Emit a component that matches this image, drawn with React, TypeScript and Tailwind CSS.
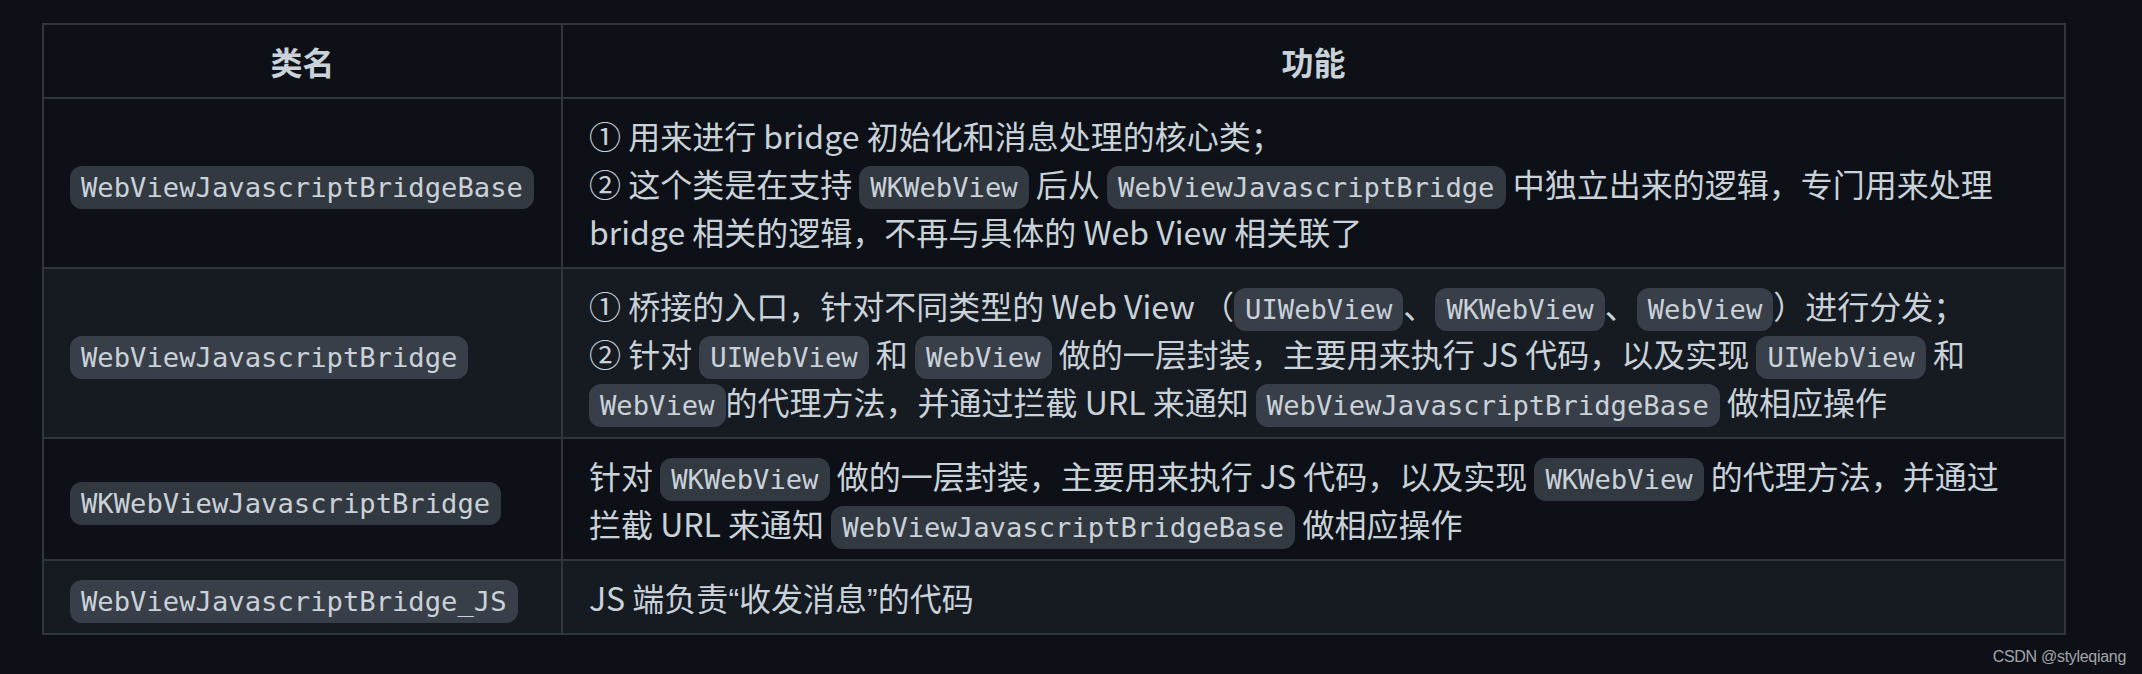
import React from "react";

const sans = "font-['Noto_Sans_CJK_SC',sans-serif]";

function Code({ children }: { children: React.ReactNode }) {
  return (
    <code className="rounded-[12px] bg-[#6e768166] px-[11px] py-[6px] font-['DejaVu_Sans_Mono',monospace] text-[27.2px] leading-[30px]">
      {children}
    </code>
  );
}

function Line({ children }: { children: React.ReactNode }) {
  return <div className="h-[48px] whitespace-nowrap">{children}</div>;
}

// narrow latin quotes, like the original rendering
function Q({ children }: { children: React.ReactNode }) {
  return <span className="font-['Liberation_Sans',sans-serif]">{children}</span>;
}

interface Row {
  name: string;
  lines: React.ReactNode[];
}

const rows: Row[] = [
  {
    name: "WebViewJavascriptBridgeBase",
    lines: [
      <>① 用来进行 bridge 初始化和消息处理的核心类；</>,
      <>
        ② 这个类是在支持 <Code>WKWebView</Code> 后从 <Code>WebViewJavascriptBridge</Code> 中独立出来的逻辑，专门用来处理
      </>,
      <>bridge 相关的逻辑，不再与具体的 Web View 相关联了</>,
    ],
  },
  {
    name: "WebViewJavascriptBridge",
    lines: [
      <>
        ① 桥接的入口，针对不同类型的 Web View （<Code>UIWebView</Code>、<Code>WKWebView</Code>、<Code>WebView</Code>）进行分发；
      </>,
      <>
        ② 针对 <Code>UIWebView</Code> 和 <Code>WebView</Code> 做的一层封装，主要用来执行 JS 代码，以及实现 <Code>UIWebView</Code> 和
      </>,
      <>
        <Code>WebView</Code>的代理方法，并通过拦截 URL 来通知 <Code>WebViewJavascriptBridgeBase</Code> 做相应操作
      </>,
    ],
  },
  {
    name: "WKWebViewJavascriptBridge",
    lines: [
      <>
        针对 <Code>WKWebView</Code> 做的一层封装，主要用来执行 JS 代码，以及实现 <Code>WKWebView</Code> 的代理方法，并通过
      </>,
      <>
        拦截 URL 来通知 <Code>WebViewJavascriptBridgeBase</Code> 做相应操作
      </>,
    ],
  },
  {
    name: "WebViewJavascriptBridge_JS",
    lines: [
      <>
        JS 端负责<Q>“</Q>收发消息<Q>”</Q>的代码
      </>,
    ],
  },
];

export default function App() {
  return (
    <div className={`h-[674px] w-[2142px] overflow-hidden bg-[#0d1117] pl-[42px] pt-[23px] text-[#c9d1d9] ${sans}`}>
      <table className="w-[2024px] table-fixed border-collapse text-[32px] leading-[48px]">
        <colgroup>
          <col className="w-[519px]" />
          <col />
        </colgroup>
        <thead>
          <tr className="bg-[#0d1117]">
            <th className="h-[74px] border-2 border-[#30363d] px-[26px] py-[12px] text-center font-semibold">类名</th>
            <th className="h-[74px] border-2 border-[#30363d] px-[26px] py-[12px] text-center font-semibold">功能</th>
          </tr>
        </thead>
        <tbody>
          {rows.map((row, i) => (
            <tr key={row.name} className={i % 2 === 1 ? "bg-[#161b22]" : "bg-[#0d1117]"}>
              <td className="border-2 border-[#30363d] px-[26px] py-[12px] align-middle">
                <div className="h-[48px] whitespace-nowrap">
                  <Code>{row.name}</Code>
                </div>
              </td>
              <td className="border-2 border-[#30363d] px-[26px] py-[12px] align-middle">
                {row.lines.map((line, j) => (
                  <Line key={j}>{line}</Line>
                ))}
              </td>
            </tr>
          ))}
        </tbody>
      </table>
      <div className="flex justify-end pr-[16px] pt-[12px]">
        <span className="font-['Liberation_Sans',sans-serif] text-[16px] leading-[20px] tracking-[-0.3px] text-[#a3a6ab]">
          CSDN @styleqiang
        </span>
      </div>
    </div>
  );
}
